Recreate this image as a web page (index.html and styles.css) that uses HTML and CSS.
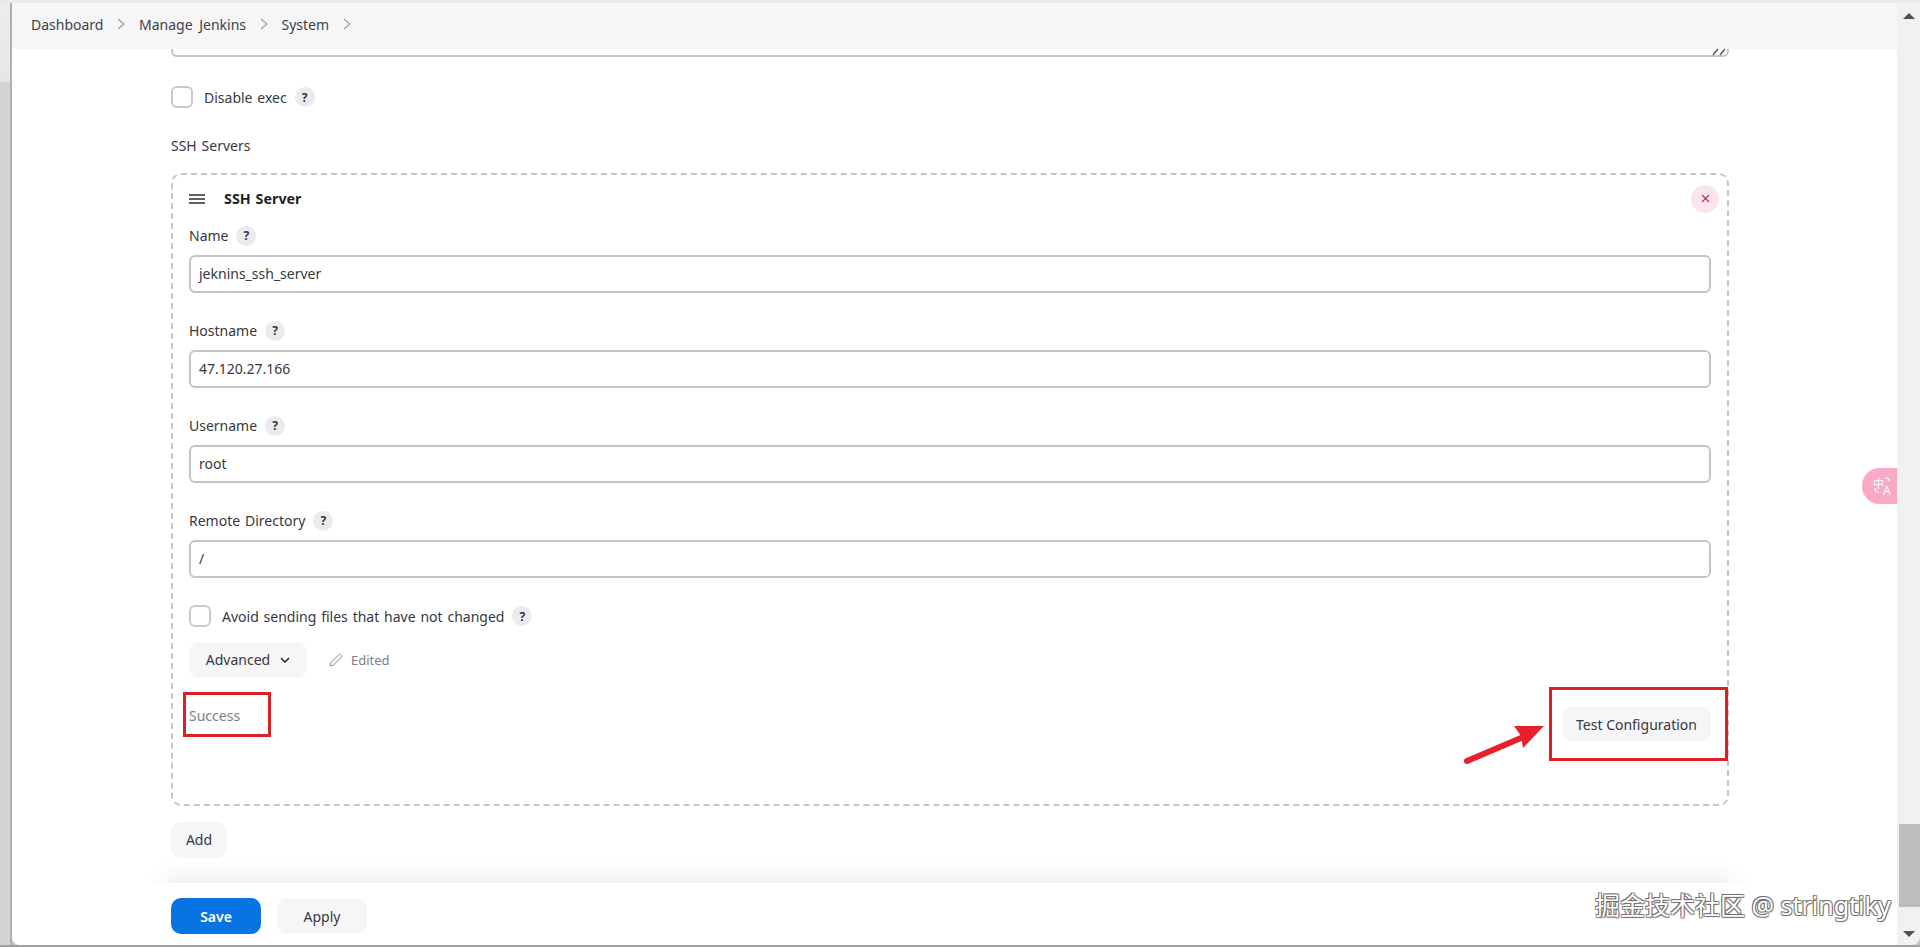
FILE: index.html
```html
<!DOCTYPE html>
<html lang="en">
<head>
<meta charset="utf-8">
<title>System - Jenkins</title>
<link rel="stylesheet" href="styles.css">
</head>
<body>
<div class="window">
  <div class="gutter"></div>
  <div class="page">
    <nav class="crumbs">
      <span>Dashboard</span>
      <svg class="chev" viewBox="0 0 8 12"><path d="M1 1l6 5-6 5"/></svg>
      <span>Manage Jenkins</span>
      <svg class="chev" viewBox="0 0 8 12"><path d="M1 1l6 5-6 5"/></svg>
      <span>System</span>
      <svg class="chev" viewBox="0 0 8 12"><path d="M1 1l6 5-6 5"/></svg>
    </nav>
    <main class="content">
      <div class="textarea-rest">
        <svg class="grip" viewBox="0 0 14 8"><path d="M1 7l5-6M8 7l5-6"/></svg>
      </div>
      <div class="check-row top-check">
        <span class="box"></span><span>Disable exec</span><span class="help">?</span>
      </div>
      <div class="group-label">SSH Servers</div>
      <section class="repeat">
        <header class="repeat-head">
          <svg class="handle" viewBox="0 0 16 10"><path d="M0 1h16M0 5h16M0 9h16"/></svg>
          <strong>SSH Server</strong>
          <span class="close"><svg viewBox="0 0 8 8"><path d="M1 1l6 6M7 1l-6 6"/></svg></span>
        </header>
        <div class="field">
          <div class="label"><span>Name</span><span class="help">?</span></div>
          <div class="input">jeknins_ssh_server</div>
        </div>
        <div class="field">
          <div class="label"><span>Hostname</span><span class="help">?</span></div>
          <div class="input">47.120.27.166</div>
        </div>
        <div class="field">
          <div class="label"><span>Username</span><span class="help">?</span></div>
          <div class="input">root</div>
        </div>
        <div class="field">
          <div class="label"><span>Remote Directory</span><span class="help">?</span></div>
          <div class="input">/</div>
        </div>
        <div class="check-row inner-check">
          <span class="box"></span><span>Avoid sending files that have not changed</span><span class="help">?</span>
        </div>
        <div class="adv-row">
          <button class="btn adv">Advanced
            <svg class="down" viewBox="0 0 10 6"><path d="M1 1l4 4 4-4"/></svg>
          </button>
          <svg class="pencil" viewBox="0 0 14 14"><path d="M1 13l.8-3.4L9.800 1.600a1.200 1.200 0 0 1 1.700 0l.9.9a1.200 1.200 0 0 1 0 1.700L4.400 12.200z"/></svg>
          <span class="edited">Edited</span>
        </div>
        <div class="test-row">
          <span class="success">Success</span>
          <button class="btn test">Test Configuration</button>
        </div>
      </section>
      <button class="btn add">Add</button>
    </main>
    <footer class="bottom">
      <button class="btn save">Save</button>
      <button class="btn apply">Apply</button>
    </footer>
  </div>
  <div class="scrollbar">
    <div class="arrow up"></div>
    <div class="track"><div class="thumb"></div></div>
    <div class="arrow dn"></div>
  </div>
</div>

<div class="mark mark-success"></div>
<div class="mark mark-test"></div>
<svg class="pointer" viewBox="0 0 84 44"><path d="M4 39L58 16"/><path class="tip" d="M81 4H51l7 10 2 12z"/></svg>
<div class="translate">
  <span class="zh">中</span><span class="en">A</span>
  <svg class="swap" viewBox="0 0 18 18"><path d="M12 1h2.500l1.500 1.500V4M2 11v2.500L3.500 15H6"/></svg>
</div>
<div class="watermark">掘金技术社区 @ stringtiky</div>
</body>
</html>
```
FILE: styles.css
```css
* { box-sizing: border-box; }
html, body { margin: 0; height: 947px; overflow: hidden; background: #fff; }
body { font-family: "Noto Sans", "Open Sans", "Noto Sans CJK SC", sans-serif; font-size: 14px; word-spacing: 1.2px; color: #383840; position: relative; }

.window { display: flex; height: 947px; border-top: 3px solid #ebe8ee; border-bottom: 2px solid #a0a0a0; background: #c4c4c4; }
.gutter { width: 12px; flex: none; background: linear-gradient(#ededed 0, #e6e6e6 79px, #d4d4d4 79px); border-right: 2px solid #b0b0b0; }
.page { flex: 1; min-width: 0; display: flex; flex-direction: column; background: #fff; border-bottom-left-radius: 8px; }

.crumbs { height: 46px; flex: none; background: #f6f6f8; display: flex; align-items: center; padding: 0 0 4px 19px; color: #3f3f48; word-spacing: 3px; }
.chev { width: 8px; height: 12px; margin: 0 13.500px 0 14px; fill: none; stroke: #9a9aa2; stroke-width: 1.1; }
.chev:last-child { margin-right: 0; }

.content { flex: 1; padding: 0 168px 0 159px; }
.textarea-rest { height: 8px; border: 2px solid #c3c6c6; border-top: 0; border-radius: 0 0 6px 6px; position: relative; }
.grip { position: absolute; right: 1px; top: -1px; width: 14px; height: 8px; fill: none; stroke: #55555c; stroke-width: 1.4; }

.check-row { display: flex; align-items: center; }
.top-check { margin-top: 29px; height: 22px; }
.box { width: 22px; height: 22px; border: 2px solid #c7c9cc; border-radius: 6px; margin-right: 11px; flex: none; }
.help { width: 20px; height: 20px; border-radius: 50%; background: #ebebed; color: #33333d; font-size: 12px; font-weight: 700; display: flex; align-items: center; justify-content: center; margin-left: 8px; flex: none; }

.group-label { margin-top: 27px; line-height: 22px; }

.repeat { margin-top: 16px; height: 633px; border: 2px dashed #c6c6c8; border-radius: 10px; padding: 0 16px; }
.repeat-head { display: flex; align-items: center; height: 48px; margin-bottom: 2px; padding-bottom: 1px; }
.handle { width: 16px; height: 10px; fill: none; stroke: #2e2e36; stroke-width: 1.4; margin-right: 19px; }
.repeat-head strong { font-size: 14.3px; font-weight: 700; color: #1f1f26; }
.close { margin-left: auto; margin-right: -8px; width: 28px; height: 28px; border-radius: 50%; background: #fae6ea; display: flex; align-items: center; justify-content: center; }
.close svg { width: 9px; height: 9px; fill: none; stroke: #d3164e; stroke-width: 1.200; }

.field { margin-bottom: 27px; }
.label { display: flex; align-items: center; height: 22px; margin-bottom: 8px; padding-bottom: 1px; }
.input { height: 38px; border: 2px solid #c3c6c6; border-radius: 6px; padding: 0 8px 2px; display: flex; align-items: center; }

.inner-check { height: 22px; }
.adv-row { display: flex; align-items: center; margin-top: 15px; }
.btn { font: inherit; border: 0; border-radius: 10px; height: 36px; background: #f6f6f8; color: #383840; padding: 0; display: inline-flex; align-items: center; justify-content: center; }
.adv { width: 118px; padding-bottom: 1px; }
.down { width: 10px; height: 6px; margin-left: 10px; fill: none; stroke: #2e2e36; stroke-width: 1.6; }
.pencil { width: 14px; height: 14px; margin-left: 22px; fill: none; stroke: #8b8b92; stroke-width: 1; }
.edited { margin-left: 8px; font-size: 13px; color: #7d7d85; }

.test-row { display: flex; justify-content: space-between; align-items: flex-start; margin-top: 28px; }
.success { line-height: 20px; color: #7d7d85; }
.test { width: 149px; }

.add { width: 56px; margin-top: 16px; padding-bottom: 1px; }

.bottom { height: 62px; flex: none; background: #fff; display: flex; align-items: flex-start; padding: 15px 0 0 159px; gap: 16px; position: relative; border-bottom-left-radius: 8px; }
.bottom::before { content: ""; position: absolute; left: 136px; width: 1600px; top: -22px; height: 22px; background: linear-gradient(rgba(240,240,243,0), #f2f2f4); -webkit-mask-image: linear-gradient(90deg, transparent, #000 30px, #000 1570px, transparent); mask-image: linear-gradient(90deg, transparent, #000 30px, #000 1570px, transparent); }
.save { width: 90px; background: #0874e4; color: #fff; font-weight: 600; }
.apply { width: 90px; }

.scrollbar { width: 23px; flex: none; background: #f1f1f1; display: flex; flex-direction: column; border-bottom-right-radius: 8px; }
.arrow { height: 22px; flex: none; position: relative; }
.arrow::after { content: ""; position: absolute; left: 6px; width: 0; height: 0; border-left: 6px solid transparent; border-right: 6px solid transparent; }
.up::after { top: 10px; border-bottom: 6px solid #505050; }
.dn::after { top: 8px; border-top: 6px solid #505050; }
.track { flex: 1; position: relative; }
.thumb { position: absolute; left: 2px; right: 0; top: 799px; height: 83px; background: #bdbdbd; }

.mark { position: absolute; border: 3px solid #dc2028; }
.mark-success { left: 183px; top: 692px; width: 88px; height: 45px; }
.mark-test { left: 1549px; top: 687px; width: 179px; height: 74px; }
.pointer { position: absolute; left: 1463px; top: 722px; width: 84px; height: 44px; fill: none; stroke: #e8202a; stroke-width: 6; stroke-linecap: round; }
.pointer .tip { fill: #e8202a; stroke: none; }

.translate { position: absolute; left: 1862px; top: 468px; width: 35px; height: 36px; border-radius: 18px 0 0 18px; background: #f8a9c8; box-shadow: 0 2px 8px rgba(0,0,0,.04); color: #fff; }
.zh { position: absolute; left: 11px; top: 9px; font-size: 11px; line-height: 13px; font-family: "Noto Sans CJK SC", sans-serif; }
.en { position: absolute; left: 21px; top: 16px; font-size: 12px; line-height: 14px; }
.swap { position: absolute; left: 11px; top: 9px; width: 18px; height: 18px; fill: none; stroke: #fff; stroke-width: 1.200; }

.watermark { position: absolute; left: 1595px; top: 889px; font-size: 25px; line-height: 32px; word-spacing: 0; color: #fff; white-space: nowrap; text-shadow: -1px -1px 0 #6e6e6e, 1px 1px 1px #6e6e6e, 1px -1px 0 #8e8e8e, -1px 1px 0 #8e8e8e; }
```
